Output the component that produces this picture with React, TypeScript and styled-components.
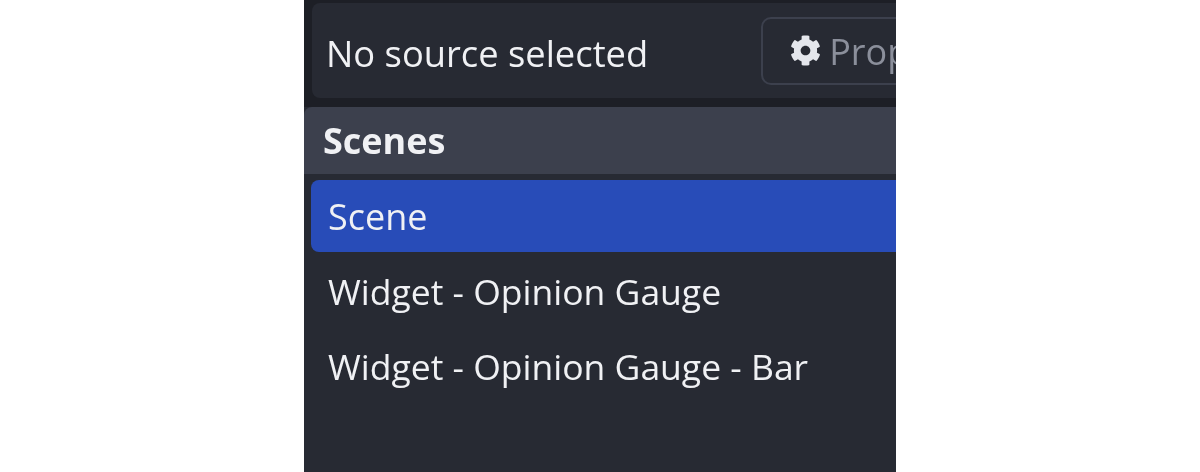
import React from "react";
import styled, { createGlobalStyle } from "styled-components";
import { FaCog } from "react-icons/fa";

const GlobalStyle = createGlobalStyle`
  html, body {
    margin: 0;
    padding: 0;
    background: #ffffff;
  }
`;

const Page = styled.div`
  width: 1200px;
  height: 472px;
  display: flex;
  justify-content: center;
  background: #ffffff;
  overflow: hidden;
`;

const Dock = styled.div`
  width: 592px;
  height: 472px;
  flex: none;
  display: flex;
  flex-direction: column;
  background: #272a33;
  font-family: "Open Sans", "Noto Sans", sans-serif;
  color: #f0f1f4;
  overflow: hidden;
  filter: blur(0.5px);
`;

const ContextArea = styled.div`
  flex: none;
  height: 107px;
  box-sizing: border-box;
  padding: 3px 0 9px 8px;
  background: #1d1f26;
`;

const ContextBar = styled.div`
  height: 95px;
  box-sizing: border-box;
  width: 640px;
  display: flex;
  align-items: center;
  gap: 113px;
  padding: 0 0 0 14px;
  background: #272a33;
  border-radius: 8px;
`;

const ContextLabel = styled.span`
  font-size: 36.3px;
  line-height: 48px;
  white-space: nowrap;
  padding-top: 4px;
`;

const PropertiesButton = styled.div`
  flex: none;
  width: 220px;
  height: 68px;
  margin-top: 1px;
  box-sizing: border-box;
  display: flex;
  align-items: center;
  gap: 8px;
  padding-left: 27px;
  border: 2px solid #3c404d;
  border-radius: 10px;
  font-size: 36px;
  color: #8b8f9b;
  svg {
    flex: none;
    color: #e4e6ec;
    margin-top: -2px;
  }
`;

const DockHeader = styled.div`
  flex: none;
  height: 67px;
  display: flex;
  align-items: center;
  padding-left: 19px;
  background: #3c404d;
  border-radius: 8px 0 0 0;
  font-size: 36px;
  font-weight: 700;
`;

const SceneList = styled.div`
  display: flex;
  flex-direction: column;
  padding: 6px 0 0 7px;
`;

const SceneRow = styled.div<{ $active?: boolean }>`
  height: ${(p) => (p.$active ? "72px" : "75px")};
  display: flex;
  align-items: center;
  padding-left: 17px;
  font-size: ${(p) => (p.$active ? "36px" : "35.5px")};
  white-space: nowrap;
  background: ${(p) => (p.$active ? "#284cb8" : "transparent")};
  border-radius: ${(p) => (p.$active ? "8px 0 0 8px" : "0")};
  padding-top: ${(p) => (p.$active ? "0" : "2px")};
  box-sizing: border-box;
`;

const scenes = ["Scene", "Widget - Opinion Gauge", "Widget - Opinion Gauge - Bar"];

export default function App() {
  return (
    <Page>
      <GlobalStyle />
      <Dock>
        <ContextArea>
          <ContextBar>
            <ContextLabel>No source selected</ContextLabel>
            <PropertiesButton>
              <FaCog size={31} />
              Properties
            </PropertiesButton>
          </ContextBar>
        </ContextArea>
        <DockHeader>Scenes</DockHeader>
        <SceneList>
          {scenes.map((name, i) => (
            <SceneRow key={name} $active={i === 0}>
              {name}
            </SceneRow>
          ))}
        </SceneList>
      </Dock>
    </Page>
  );
}
